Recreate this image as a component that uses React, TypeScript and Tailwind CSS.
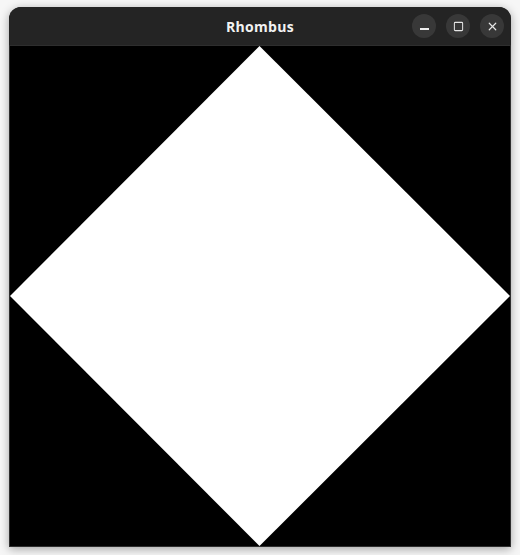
import { Square, X } from 'lucide-react'

function TitleButton({ children }: { children: React.ReactNode }) {
  return (
    <div className="w-6 h-6 rounded-full bg-[#383838] flex items-center justify-center text-[#e6e6e6]">
      {children}
    </div>
  )
}

export default function App() {
  return (
    <div className="w-[520px] h-[555px] bg-[#f6f6f6] pt-[7px] pl-[9px] overflow-hidden">
      <div className="w-[502px] rounded-t-[12px] overflow-hidden shadow-[0_2px_10px_rgba(0,0,0,0.35)] bg-[#242424]">
        {/* Header */}
        <div className="relative h-[38px] flex items-center justify-center bg-[#242424]">
          <span className="text-[14px] font-bold text-[#f2f2f2] tracking-[0.3px] font-['Open_Sans','Noto_Sans',sans-serif]">
            Rhombus
          </span>
          <div className="absolute right-[7px] top-[7px] flex items-center gap-[10px]">
            <TitleButton>
              <div className="w-[9px] h-[2px] bg-[#eeeeee] mt-[6px]" />
            </TitleButton>
            <TitleButton>
              <Square className="w-[11px] h-[11px]" strokeWidth={2.2} />
            </TitleButton>
            <TitleButton>
              <X className="w-[13px] h-[13px]" strokeWidth={2.2} />
            </TitleButton>
          </div>
        </div>

        {/* Canvas */}
        <div className="border border-[#2e2e2e] bg-black w-[502px] h-[502px]">
          <svg width="500" height="500" viewBox="0 0 500 500" className="block">
            <polygon points="249.5,0 500,250 249.5,500 0,250" fill="#ffffff" />
          </svg>
        </div>
      </div>
    </div>
  )
}
